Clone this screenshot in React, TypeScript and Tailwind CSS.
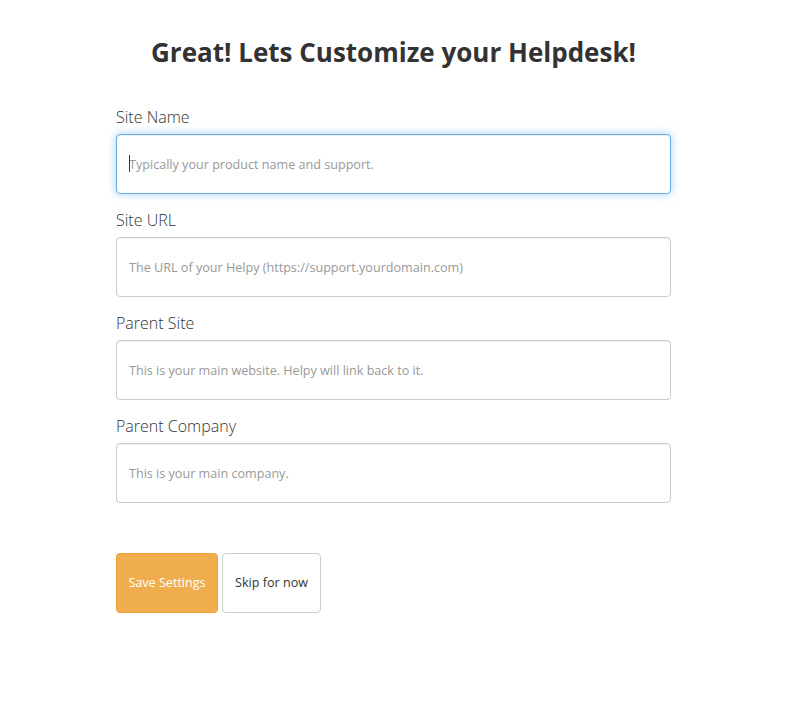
const fields = [
  { label: "Site Name", placeholder: "Typically your product name and support.", focused: true },
  { label: "Site URL", placeholder: "The URL of your Helpy (https://support.yourdomain.com)" },
  { label: "Parent Site", placeholder: "This is your main website. Helpy will link back to it." },
  { label: "Parent Company", placeholder: "This is your main company." },
];

export default function App() {
  return (
    <div className="min-h-[710px] w-full bg-white font-['Open_Sans',sans-serif] text-[#333]">
      <div className="ml-[116px] w-[555px] pt-[34px]">
        <h1 className="text-center text-[26px] font-bold leading-[36px] text-[#333]">
          Great! Lets Customize your Helpdesk!
        </h1>
        <form className="mt-[35px] flex flex-col">
          {fields.map((f, i) => (
            <div key={i} className={i > 0 ? "mt-[14px]" : ""}>
              <label className="block text-[16px] font-light leading-[24px] text-[#333]">{f.label}</label>
              <div className="relative mt-[5px]">
                <input
                  readOnly
                  placeholder={f.placeholder}
                  className={
                    "h-[60px] w-full rounded-[4px] border bg-white px-[12px] text-[12.6px] text-[#555] outline-none placeholder:text-[#999] " +
                    (f.focused
                      ? "border-[#66afe9] shadow-[inset_0_1px_1px_rgba(0,0,0,0.075),0_0_8px_rgba(102,175,233,0.6)]"
                      : "border-[#ccc] shadow-[inset_0_1px_1px_rgba(0,0,0,0.075)]")
                  }
                />
                {f.focused && (
                  <span className="absolute left-[13px] top-[21px] h-[17px] w-px bg-[#333]" />
                )}
              </div>
            </div>
          ))}
          <div className="mt-[50px] flex gap-[4px]">
            <button
              type="button"
              className="h-[60px] w-[102px] rounded-[4px] border border-[#eea236] bg-[#f0ad4e] text-[12.6px] text-white"
            >
              Save Settings
            </button>
            <button
              type="button"
              className="h-[60px] w-[99px] rounded-[4px] border border-[#ccc] bg-white text-[12.6px] text-[#333]"
            >
              Skip for now
            </button>
          </div>
        </form>
      </div>
    </div>
  );
}
